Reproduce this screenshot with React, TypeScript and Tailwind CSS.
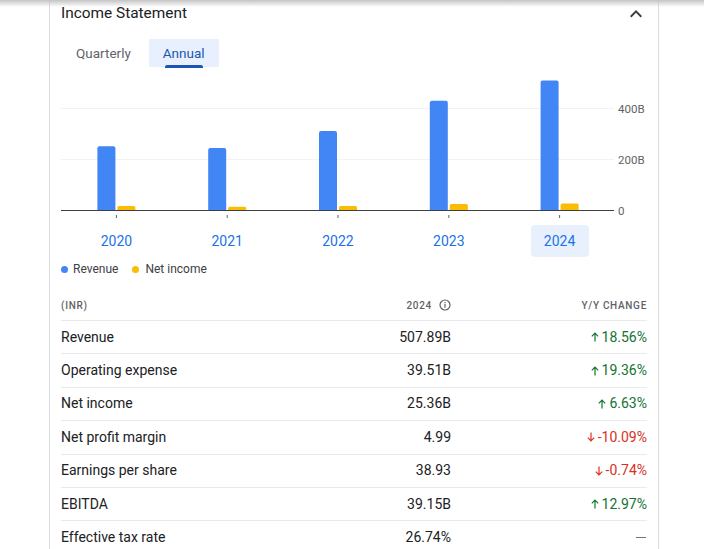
import React from "react";

const FONT = { fontFamily: "Roboto, 'Noto Sans', Arial, sans-serif" };

// chart data, in billions
const YEARS = [
  { year: "2020", revenue: 250, net: 15.5 },
  { year: "2021", revenue: 243, net: 13 },
  { year: "2022", revenue: 310, net: 15.5 },
  { year: "2023", revenue: 428, net: 23.5 },
  { year: "2024", revenue: 507.89, net: 25.36 },
];

const ROWS = [
  { label: "Revenue", value: "507.89B", change: "18.56%", dir: "up" },
  { label: "Operating expense", value: "39.51B", change: "19.36%", dir: "up" },
  { label: "Net income", value: "25.36B", change: "6.63%", dir: "up" },
  { label: "Net profit margin", value: "4.99", change: "-10.09%", dir: "down" },
  { label: "Earnings per share", value: "38.93", change: "-0.74%", dir: "down" },
  { label: "EBITDA", value: "39.15B", change: "12.97%", dir: "up" },
  { label: "Effective tax rate", value: "26.74%", change: "", dir: "none" },
];

const PX_PER_B = 0.255;
const SLOT = 110.8;
const BASE = 142;

function Chart() {
  return (
    <svg width="586" height="152" className="block">
      <line x1="0" x2="553" y1="40.5" y2="40.5" stroke="#f1f3f4" strokeWidth="1" />
      <line x1="0" x2="553" y1="91.5" y2="91.5" stroke="#f1f3f4" strokeWidth="1" />
      {YEARS.map((d, i) => {
        const c = SLOT * i + SLOT / 2;
        const rh = d.revenue * PX_PER_B;
        const nh = d.net * PX_PER_B;
        return (
          <g key={d.year}>
            <path
              d={`M${c - 19} ${BASE} V${BASE - rh + 2} Q${c - 19} ${BASE - rh} ${c - 17} ${BASE - rh} H${c - 3} Q${c - 1} ${BASE - rh} ${c - 1} ${BASE - rh + 2} V${BASE} Z`}
              fill="#4285f4"
            />
            <path
              d={`M${c + 1} ${BASE} V${BASE - nh + 1.5} Q${c + 1} ${BASE - nh} ${c + 2.5} ${BASE - nh} H${c + 17.5} Q${c + 19} ${BASE - nh} ${c + 19} ${BASE - nh + 1.5} V${BASE} Z`}
              fill="#fbbc04"
            />
            <rect x={c - 0.5} y="147" width="1" height="3" fill="#5f6368" />
          </g>
        );
      })}
      <line x1="0" x2="553" y1="142.5" y2="142.5" stroke="#3c4043" strokeWidth="1" />
      <g fill="#5f6368" fontSize="11.5" style={FONT} dominantBaseline="central">
        <text x="557" y="40.5">400B</text>
        <text x="557" y="91.5">200B</text>
        <text x="557" y="142.5">0</text>
      </g>
    </svg>
  );
}

function Arrow({ dir }: { dir: string }) {
  return (
    <svg width="8" height="10" viewBox="0 0 8 10" className="mr-[3px]">
      {dir === "up" ? (
        <path d="M4 9.5V1.2M0.8 4.4L4 1.2L7.2 4.4" fill="none" stroke="currentColor" strokeWidth="1.2" />
      ) : (
        <path d="M4 0.5V8.8M0.8 5.6L4 8.8L7.2 5.6" fill="none" stroke="currentColor" strokeWidth="1.2" />
      )}
    </svg>
  );
}

export default function App() {
  return (
    <div className="relative w-[704px] h-[549px] overflow-hidden bg-white" style={FONT}>
      {/* top header shadow */}
      <div className="absolute top-0 left-0 right-0 h-[7px] bg-gradient-to-b from-[#c4c4c4] to-transparent" />

      <div className="ml-[49px] w-[610px] h-full border-x border-[#dadce0] px-[11px]">
        {/* Title */}
        <div className="h-[26px] flex items-center justify-between">
          <span className="text-[15.4px] text-[#202124] mt-[1px]">Income Statement</span>
          <svg width="24" height="24" viewBox="0 0 24 24" className="mr-[-1px] mt-[2px]">
            <path d="M12 8l-6 6 1.41 1.41L12 10.83l4.59 4.58L18 14z" fill="#3c4043" />
          </svg>
        </div>

        {/* Tabs */}
        <div className="mt-[13px] flex gap-[3px] h-[29px]">
          <button className="pl-[15px] pr-[15px] h-[28px] text-[13.5px] font-[450] text-[#5f6368]">Quarterly</button>
          <button className="relative px-[14px] h-[28px] text-[13.5px] font-[450] text-[#1a57b5] bg-[#e8f0fe]">
            Annual
            <span className="absolute left-[16px] right-[16px] -bottom-[1px] h-[3px] rounded-t-[2px] bg-[#1a57b5]" />
          </button>
        </div>

        <Chart />

        {/* Years */}
        <div className="mt-[5px] w-[554px] grid grid-cols-5 h-[32px]">
          {YEARS.map((d) => (
            <div key={d.year} className="flex justify-center">
              <div
                className={`w-[58px] h-[32px] flex items-center justify-center rounded-[4px] text-[14px] font-[450] text-[#1a73e8] ${
                  d.year === "2024" ? "bg-[#e8f0fe]" : ""
                }`}
              >
                {d.year}
              </div>
            </div>
          ))}
        </div>

        {/* Legend */}
        <div className="mt-[5px] h-[14px] flex items-center text-[12px] text-[#3c4043]">
          <span className="w-[7px] h-[7px] rounded-full bg-[#4285f4]" />
          <span className="ml-[5px]">Revenue</span>
          <span className="ml-[14px] w-[7px] h-[7px] rounded-full bg-[#fbbc04]" />
          <span className="ml-[6px]">Net income</span>
        </div>

        {/* Table */}
        <div className="mt-[14px]">
          <div className="grid grid-cols-[1fr_120px_196px] h-[30px] items-center text-[10px] font-medium tracking-[0.7px] text-[#5f6368]">
            <span>(INR)</span>
            <span className="flex items-center justify-end">
              2024
              <svg width="12" height="12" viewBox="0 0 12 12" className="ml-[7px]">
                <circle cx="6" cy="6" r="5" fill="none" stroke="#5f6368" strokeWidth="1.2" />
                <rect x="5.4" y="5" width="1.2" height="3.8" fill="#5f6368" />
                <rect x="5.4" y="3" width="1.2" height="1.2" fill="#5f6368" />
              </svg>
            </span>
            <span className="text-right">Y/Y CHANGE</span>
          </div>
          {ROWS.map((r) => (
            <div
              key={r.label}
              className="grid grid-cols-[1fr_120px_196px] h-[33.4px] items-center border-t border-[#e8eaed]"
            >
              <span className="text-[14px] font-[450] text-[#202124]">{r.label}</span>
              <span className="text-right text-[14px] font-[450] text-[#202124]">{r.value}</span>
              <span
                className={`flex items-center justify-end text-[14px] font-[450] ${
                  r.dir === "up" ? "text-[#137333]" : r.dir === "down" ? "text-[#d93025]" : "text-[#70757a]"
                }`}
              >
                {r.dir === "none" ? (
                  <span className="mr-[1px] w-[10px] h-[1.5px] bg-[#70757a]" />
                ) : (
                  <>
                    <Arrow dir={r.dir} />
                    {r.change}
                  </>
                )}
              </span>
            </div>
          ))}
        </div>
      </div>
    </div>
  );
}
